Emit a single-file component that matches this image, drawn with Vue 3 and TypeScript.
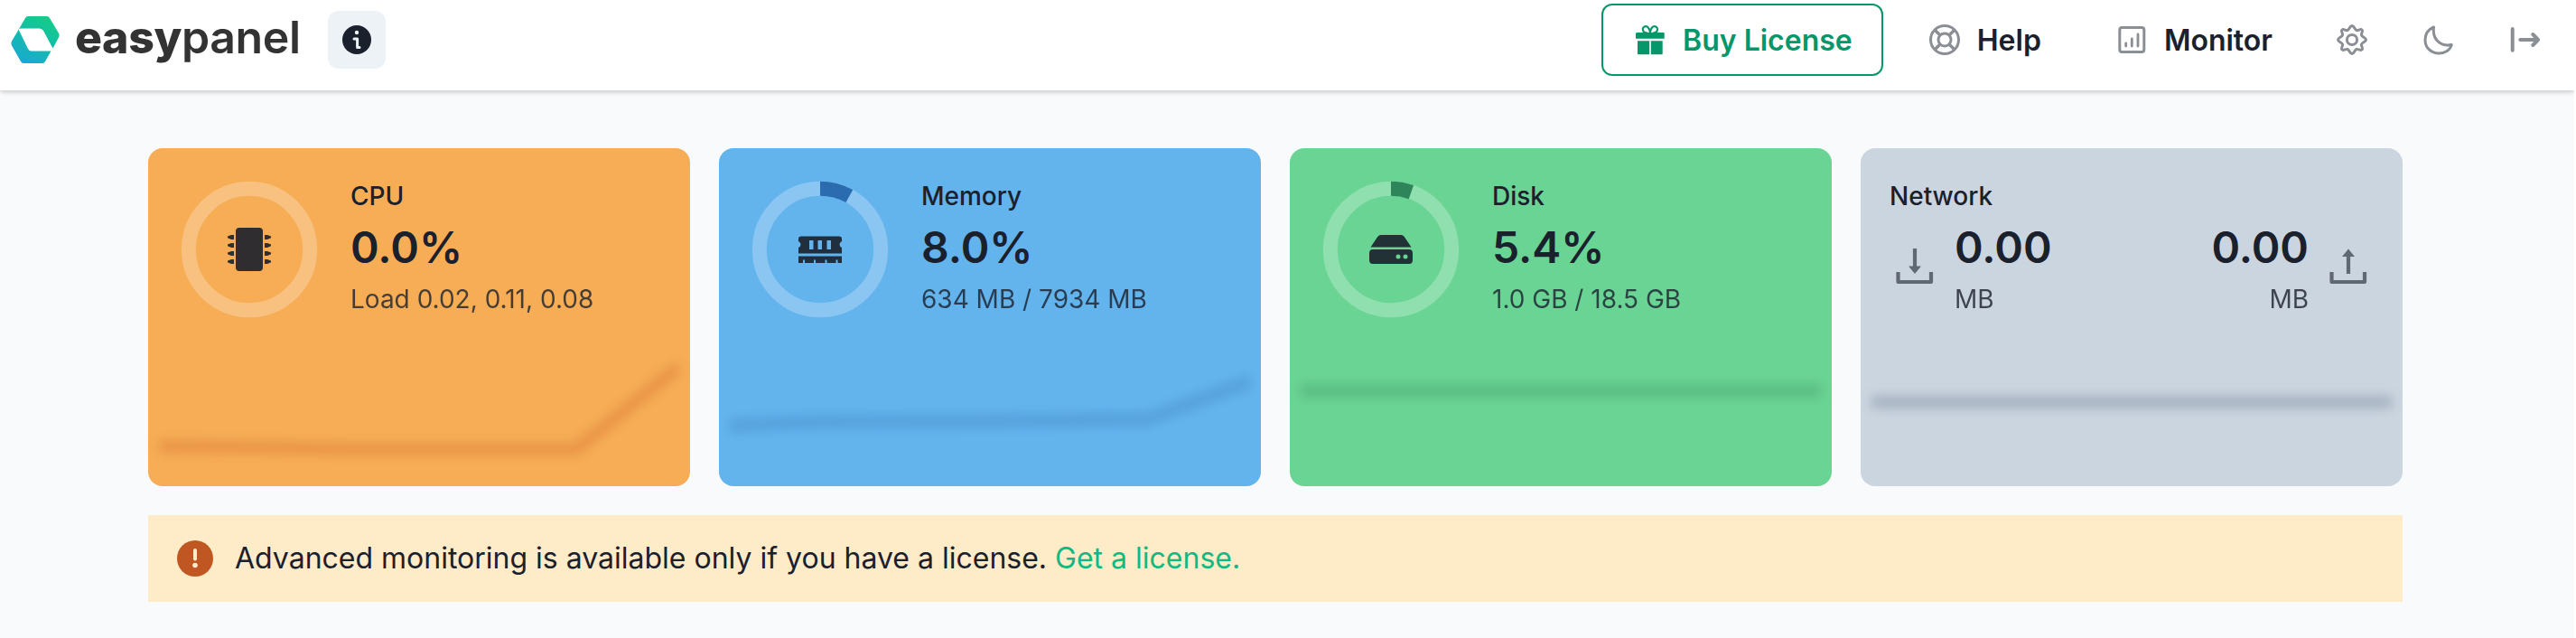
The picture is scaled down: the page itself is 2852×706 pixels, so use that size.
<script setup lang="ts">
interface Stat {
  key: string
  title: string
  value: string
  detail: string
  percent: number
  line: string
}

const stats: Stat[] = [
  { key: 'cpu', title: 'CPU', value: '0.0%', detail: 'Load 0.02, 0.11, 0.08', percent: 0, line: '12,330 120,331 230,333 474,333 587,242' },
  { key: 'memory', title: 'Memory', value: '8.0%', detail: '634 MB / 7934 MB', percent: 8, line: '12,307 100,303 300,302 474,300 588,258' },
  { key: 'disk', title: 'Disk', value: '5.4%', detail: '1.0 GB / 18.5 GB', percent: 5.4, line: '12,268.5 588,268.5' },
]

const circumference = 2 * Math.PI * 42
const dash = (percent: number): string => `${(percent / 100) * circumference} ${circumference}`
</script>

<template>
  <div class="page">
    <header class="header">
      <div class="brand">
        <svg class="mark" viewBox="0 0 54 52">
          <defs>
            <linearGradient id="mark-fill" x1="0.2" y1="1" x2="0.75" y2="0">
              <stop offset="0" stop-color="#18a9d3" />
              <stop offset="1" stop-color="#13cd86" />
            </linearGradient>
          </defs>
          <path fill="url(#mark-fill)" fill-rule="evenodd" d="M19 0H40Q42 0 43 2L53.200 19Q54 21 53.200 23L46.500 35.500L36 16Q34.500 13.500 32 13.500H11Q8.500 13.500 9 15.500L18.500 35Q20 38.500 23 38.500H44.500L38 50Q37 52 35 52H14Q12 52 11 50L.8 32Q0 30 .8 28L16 2Q17 0 19 0Z" />
        </svg>
        <div class="wordmark"><b>easy</b><span>panel</span></div>
        <button class="info" aria-label="Info">
          <svg viewBox="0 0 32 32">
            <circle cx="16" cy="16" r="16" fill="#1a202c" />
            <circle cx="16" cy="8" r="2.200" fill="#edf2f7" />
            <path d="M13 15H16.600V24.600H19" fill="none" stroke="#edf2f7" stroke-width="3" stroke-linejoin="round" stroke-linecap="round" />
          </svg>
        </button>
      </div>
      <nav class="nav">
        <a class="btn outline">
          <svg viewBox="0 0 40 40">
            <g fill="currentColor">
              <path d="M5.500 12H34.500Q35.700 12 35.700 13.200V18.700H4V13.200Q4 12 5.500 12Z" />
              <path d="M6 21.300H19.200V36.200H7Q6 36.200 6 35.200ZM20.800 21.300H33.700V35.200Q33.700 36.200 32.700 36.200H20.800Z" />
            </g>
            <path d="M17 12.500C10.500 12.500 10.500 5.200 15 5.200C18.200 5.200 19.300 8.500 19.900 12C20.500 8.500 21.600 5.200 24.800 5.200C29.300 5.200 29.300 12.500 23 12.500" fill="none" stroke="currentColor" stroke-width="2.200" />
          </svg>
          Buy License
        </a>
        <a class="btn">
          <svg class="dim" viewBox="0 0 40 40" fill="none" stroke="currentColor" stroke-width="3">
            <circle cx="20" cy="20" r="15.500" />
            <circle cx="20" cy="20" r="7" />
            <path d="M9.200 9.200L15 15M30.800 9.200L25 15M9.200 30.800L15 25M30.800 30.800L25 25" stroke-width="3.500" />
          </svg>
          Help
        </a>
        <a class="btn">
          <svg class="dim" viewBox="0 0 40 40" fill="none" stroke="currentColor" stroke-width="3" stroke-linecap="round">
            <rect x="6.800" y="6.500" width="27" height="27" rx="2.500" />
            <path d="M13.700 24V27M20.300 19V27M27 14V27" stroke-width="2.800" />
          </svg>
          Monitor
        </a>
        <a class="btn square">
          <svg class="dim" viewBox="0 0 40 40" fill="none" stroke="currentColor" stroke-width="3" stroke-linejoin="round">
            <circle cx="20" cy="20" r="5.600" />
            <path d="M20 4.500C22.500 4.500 22.800 8.800 25 9.500C27 10.200 29.300 7.500 31 9C32.700 10.700 29.800 13 30.500 15C31.300 17.200 35.500 17.500 35.500 20C35.500 22.500 31.300 22.800 30.500 25C29.800 27 32.700 29.300 31 31C29.300 32.500 27 29.800 25 30.500C22.800 31.200 22.500 35.500 20 35.500C17.500 35.500 17.200 31.200 15 30.500C13 29.800 10.700 32.500 9 31C7.300 29.300 10.200 27 9.500 25C8.700 22.800 4.500 22.500 4.500 20C4.500 17.500 8.700 17.200 9.500 15C10.200 13 7.300 10.700 9 9C10.700 7.500 13 10.200 15 9.500C17.200 8.800 17.500 4.500 20 4.500Z" />
          </svg>
        </a>
        <a class="btn square">
          <svg class="dim" viewBox="0 0 40 40" fill="none" stroke="currentColor" stroke-width="3" stroke-linejoin="round">
            <path d="M14.500 6C8.500 8.500 5 14 5 20.500C5 29 12 35 20 35C27 35 32.800 31.500 34.200 25.500C24 27.500 12.500 21.500 14.500 6Z" />
          </svg>
        </a>
        <a class="btn square">
          <svg class="dim" viewBox="0 0 40 40" fill="none" stroke="currentColor" stroke-width="4" stroke-linecap="round" stroke-linejoin="round">
            <path d="M5.700 8V31.700M14.300 20H34M28.300 14L34 20L28.300 26" />
          </svg>
        </a>
      </nav>
    </header>

    <main class="content">
      <section class="cards">
        <article v-for="s in stats" :key="s.key" class="card" :class="s.key">
          <svg class="chart" viewBox="0 0 600 374"><polyline :points="s.line" /></svg>
          <div class="gauge">
            <svg class="ring" viewBox="0 0 100 100">
              <circle class="track" cx="50" cy="50" r="42" />
              <circle v-if="s.percent" class="arc" cx="50" cy="50" r="42" :stroke-dasharray="dash(s.percent)" transform="rotate(-90 50 50)" />
            </svg>
            <svg class="glyph" viewBox="0 0 48 48">
              <template v-if="s.key === 'cpu'">
                <rect x="9" y="0" width="30" height="48" rx="4" />
                <path v-for="y in [10.4, 19.4, 28.4, 37.4]" :key="y" :transform="`translate(0 ${y})`" d="M7 -2.500H4L0 -.8V.8L4 2.500H7ZM41 -2.500H44L48 -.8V.8L44 2.500H41Z" />
              </template>
              <path v-else-if="s.key === 'memory'" fill-rule="evenodd" d="M3 9.500H45Q48 9.500 48 12V15Q45.500 16 45.500 18.500T48 22V28.500H0V22Q2.500 21 2.500 18.500T0 15V12Q0 9.500 3 9.500ZM12 14V24H16.500V14ZM21.500 14V24H26V14ZM31.500 14V24H36V14ZM0 31.500H48V39H43.500V35.500H41.500V39H31.500V35.500H29.500V39H19V35.500H17V39H7V35.500H5V39H0Z" />
              <path v-else fill-rule="evenodd" d="M13 8H35Q37.500 8 38.800 10L46.500 21.500H1.500L9.200 10Q10.500 8 13 8ZM4 24H44Q48 24 48 28V36Q48 40 44 40H4Q0 40 0 36V28Q0 24 4 24ZM32 29.500A2.500 2.500 0 1 0 32 34.500A2.500 2.500 0 1 0 32 29.500ZM40 29.500A2.500 2.500 0 1 0 40 34.500A2.500 2.500 0 1 0 40 29.500Z" />
            </svg>
          </div>
          <div class="figures">
            <div class="title">{{ s.title }}</div>
            <div class="value">{{ s.value }}</div>
            <div class="detail">{{ s.detail }}</div>
          </div>
        </article>

        <article class="card network">
          <svg class="chart" viewBox="0 0 600 374"><polyline points="12,281 588,281" /></svg>
          <div class="traffic">
            <div class="title">Network</div>
            <div class="flows">
              <div class="flow">
                <svg viewBox="0 0 56 56"><path d="M28 8V30" class="line" /><path d="M21 27.500H35L28 36Z" /><path d="M9.500 34V45H46V34" class="line" /></svg>
                <div><div class="value">0.00</div><div class="detail">MB</div></div>
              </div>
              <div class="flow up">
                <div><div class="value">0.00</div><div class="detail">MB</div></div>
                <svg viewBox="0 0 56 56"><path d="M28 14V36" class="line" /><path d="M21 17H35L28 8.500Z" /><path d="M9.500 34V45H46V34" class="line" /></svg>
              </div>
            </div>
          </div>
        </article>
      </section>

      <div class="alert">
        <svg viewBox="0 0 40 40">
          <circle cx="20" cy="20" r="20" fill="#c05621" />
          <path d="M20 11V20.500" stroke="#feebc8" stroke-width="4" stroke-linecap="round" />
          <circle cx="20" cy="27.500" r="2.800" fill="#feebc8" />
        </svg>
        <p>Advanced monitoring is available only if you have a license. <a>Get a license.</a></p>
      </div>
    </main>
  </div>
</template>

<style>
body { background: #fff; }
</style>

<style scoped>
.page { width: 2850px; height: 706px; overflow: hidden; background: #f9fafc; color: #1a202c; font-family: Inter, "Liberation Sans", sans-serif; }
svg { display: block; flex: none; }
.header { box-sizing: border-box; height: 100px; padding: 4px 14px 16px 12px; display: flex; justify-content: space-between; align-items: center; background: #fff; box-shadow: 0 2px 6px rgba(0, 0, 0, .1), 0 2px 4px rgba(0, 0, 0, .1); position: relative; }
.brand { display: flex; align-items: center; }
.mark { width: 54px; height: 52px; }
.wordmark { width: 280px; margin-left: 17px; box-sizing: border-box; font-size: 50px; line-height: 60px; color: #333; white-space: nowrap; letter-spacing: -.4px; margin-top: -6px; }
.wordmark b { font-weight: 800; }
.wordmark span { font-weight: 600; }
.info { width: 64px; height: 64px; padding: 0; border: 0; border-radius: 12px; background: #edf2f7; display: flex; align-items: center; justify-content: center; }
.info svg { width: 32px; height: 32px; }
.nav { display: flex; gap: 16px; }
.btn { box-sizing: border-box; height: 80px; padding: 0 32px; display: flex; align-items: center; gap: 16px; font-size: 32px; font-weight: 600; border-radius: 12px; white-space: nowrap; }
.btn svg { width: 40px; height: 40px; }
.outline { border: 2px solid #059669; color: #059669; }
.square { width: 80px; padding: 0 20px; }
.dim { opacity: .5; }
.content { width: 2496px; margin: 64px 0 0 164px; }
.cards { display: grid; grid-template-columns: repeat(4, 600px); gap: 32px; }
.card { position: relative; box-sizing: border-box; height: 374px; padding: 32px; border-radius: 16px; display: flex; align-items: flex-start; gap: 32px; }
.cpu { background: #f6ad55; --line: #a81400; --strength: .15; }
.memory { background: #63b3ed; --line: #002c70; --strength: .13; }
.disk { background: #6ad494; --line: #003024; --strength: .14; }
.network { background: #cbd5e0; --line: #3f5066; --strength: .26; }
.chart { position: absolute; inset: 0; width: 600px; height: 374px; overflow: visible; }
.chart polyline { fill: none; stroke: var(--line); stroke-width: 14px; stroke-linejoin: round; opacity: var(--strength); filter: blur(6px); }
.gauge { width: 160px; height: 160px; display: grid; place-items: center; position: relative; }
.gauge > svg { grid-area: 1 / 1; }
.ring { width: 160px; height: 160px; }
.ring circle { fill: none; stroke-width: 10; }
.track { stroke: #fff; opacity: .25; }
.memory .arc { stroke: #2b6cb0; }
.disk .arc { stroke: #2f855a; }
.glyph { width: 48px; height: 48px; fill: #1a202c; opacity: .9; }
.figures, .traffic { position: relative; }
.title { font-size: 28px; line-height: 42px; font-weight: 500; }
.value { font-size: 48px; line-height: 72px; font-weight: 600; }
.detail { font-size: 28px; line-height: 42px; opacity: .8; }
.traffic { width: 100%; }
.flows { display: flex; justify-content: space-between; }
.flow { display: flex; align-items: center; gap: 16px; }
.flow svg { width: 56px; height: 56px; fill: #1a202c; opacity: .6; }
.flow .line { fill: none; stroke: #1a202c; stroke-width: 4.2; stroke-linejoin: round; }
.up { text-align: right; }
.alert { box-sizing: border-box; height: 96px; margin-top: 32px; padding: 24px 32px; display: flex; align-items: center; gap: 24px; background: #feebc8; font-size: 32px; line-height: 48px; }
.alert svg { width: 40px; height: 40px; }
.alert p { margin: 0; }
.alert a { color: #10b981; }
</style>
